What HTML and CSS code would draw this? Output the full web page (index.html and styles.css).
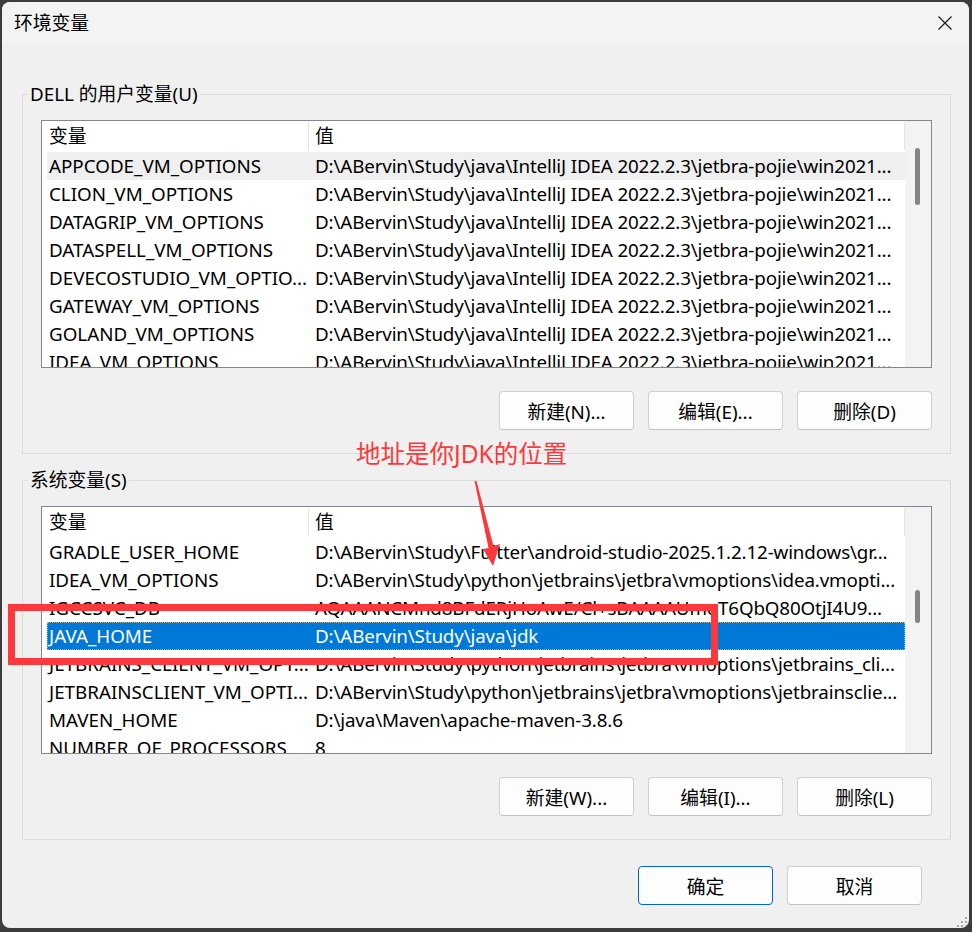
FILE: index.html
```html
<!DOCTYPE html>
<html lang="zh-CN">
<head>
    <meta charset="UTF-8">
    <title>环境变量</title>
    <link rel="stylesheet" href="styles.css">
</head>
<body>
    <div class="dialog">
        <div class="titlebar">
            <span class="title">环境变量</span>
            <svg class="close" width="14" height="14" viewBox="0 0 14 14">
                <path d="M0.5 0.5L13.5 13.5M13.5 0.5L0.5 13.5" stroke="#1b1b1b" stroke-width="1.2" fill="none"/>
            </svg>
        </div>

        <div class="content">
            <fieldset class="group">
                <legend>DELL 的用户变量(U)</legend>
                <div class="list">
                    <div class="list-main">
                        <div class="list-head">
                            <div class="head-name">变量</div>
                            <div class="head-value">值</div>
                        </div>
                        <div class="row hover">
                            <div class="cell-name">APPCODE_VM_OPTIONS</div>
                            <div class="cell-value">D:\ABervin\Study\java\IntelliJ IDEA 2022.2.3\jetbra-pojie\win2021...</div>
                        </div>
                        <div class="row">
                            <div class="cell-name">CLION_VM_OPTIONS</div>
                            <div class="cell-value">D:\ABervin\Study\java\IntelliJ IDEA 2022.2.3\jetbra-pojie\win2021...</div>
                        </div>
                        <div class="row">
                            <div class="cell-name">DATAGRIP_VM_OPTIONS</div>
                            <div class="cell-value">D:\ABervin\Study\java\IntelliJ IDEA 2022.2.3\jetbra-pojie\win2021...</div>
                        </div>
                        <div class="row">
                            <div class="cell-name">DATASPELL_VM_OPTIONS</div>
                            <div class="cell-value">D:\ABervin\Study\java\IntelliJ IDEA 2022.2.3\jetbra-pojie\win2021...</div>
                        </div>
                        <div class="row">
                            <div class="cell-name">DEVECOSTUDIO_VM_OPTIO...</div>
                            <div class="cell-value">D:\ABervin\Study\java\IntelliJ IDEA 2022.2.3\jetbra-pojie\win2021...</div>
                        </div>
                        <div class="row">
                            <div class="cell-name">GATEWAY_VM_OPTIONS</div>
                            <div class="cell-value">D:\ABervin\Study\java\IntelliJ IDEA 2022.2.3\jetbra-pojie\win2021...</div>
                        </div>
                        <div class="row">
                            <div class="cell-name">GOLAND_VM_OPTIONS</div>
                            <div class="cell-value">D:\ABervin\Study\java\IntelliJ IDEA 2022.2.3\jetbra-pojie\win2021...</div>
                        </div>
                        <div class="row">
                            <div class="cell-name">IDEA_VM_OPTIONS</div>
                            <div class="cell-value">D:\ABervin\Study\java\IntelliJ IDEA 2022.2.3\jetbra-pojie\win2021...</div>
                        </div>
                    </div>
                    <div class="scroll">
                        <div class="thumb thumb-user"></div>
                    </div>
                </div>
                <div class="btn-row">
                    <button class="btn">新建(N)...</button>
                    <button class="btn">编辑(E)...</button>
                    <button class="btn">删除(D)</button>
                </div>
            </fieldset>

            <fieldset class="group group-sys">
                <legend>系统变量(S)</legend>
                <div class="list">
                    <div class="list-main">
                        <div class="list-head">
                            <div class="head-name">变量</div>
                            <div class="head-value">值</div>
                        </div>
                        <div class="row">
                            <div class="cell-name">GRADLE_USER_HOME</div>
                            <div class="cell-value">D:\ABervin\Study\Fultter\android-studio-2025.1.2.12-windows\gr...</div>
                        </div>
                        <div class="row">
                            <div class="cell-name">IDEA_VM_OPTIONS</div>
                            <div class="cell-value">D:\ABervin\Study\python\jetbrains\jetbra\vmoptions\idea.vmopti...</div>
                        </div>
                        <div class="row">
                            <div class="cell-name">IGCCSVC_DB</div>
                            <div class="cell-value">AQAAANCMnd8BFdERjHoAwE/Cl+sBAAAAUmoT6QbQ80OtjI4U9...</div>
                        </div>
                        <div class="row selected">
                            <div class="cell-name">JAVA_HOME</div>
                            <div class="cell-value">D:\ABervin\Study\java\jdk</div>
                        </div>
                        <div class="row">
                            <div class="cell-name">JETBRAINS_CLIENT_VM_OPT...</div>
                            <div class="cell-value">D:\ABervin\Study\python\jetbrains\jetbra\vmoptions\jetbrains_cli...</div>
                        </div>
                        <div class="row">
                            <div class="cell-name">JETBRAINSCLIENT_VM_OPTI...</div>
                            <div class="cell-value">D:\ABervin\Study\python\jetbrains\jetbra\vmoptions\jetbrainsclie...</div>
                        </div>
                        <div class="row">
                            <div class="cell-name">MAVEN_HOME</div>
                            <div class="cell-value">D:\java\Maven\apache-maven-3.8.6</div>
                        </div>
                        <div class="row">
                            <div class="cell-name">NUMBER_OF_PROCESSORS</div>
                            <div class="cell-value">8</div>
                        </div>
                    </div>
                    <div class="scroll">
                        <div class="thumb thumb-sys"></div>
                    </div>
                </div>
                <div class="btn-row">
                    <button class="btn">新建(W)...</button>
                    <button class="btn">编辑(I)...</button>
                    <button class="btn">删除(L)</button>
                </div>
            </fieldset>

            <div class="footer">
                <button class="btn btn-default">确定</button>
                <button class="btn">取消</button>
            </div>
        </div>

        <!-- 标注 -->
        <span class="note">地址是你JDK的位置</span>
        <svg class="marks" width="972" height="932" viewBox="0 0 972 932">
            <polygon points="474.5,481 476.5,481 493.5,546 500,544 493,566 483,549 488.5,548" fill="#f9393d"/>
            <rect x="11.5" y="607.5" width="703" height="54" fill="none" stroke="#f9393d" stroke-width="7"/>
        </svg>

        <svg class="grip" width="12" height="12" viewBox="0 0 12 12">
            <rect x="9" y="1" width="2" height="2" fill="#a8a8a8"/>
            <rect x="5" y="5" width="2" height="2" fill="#a8a8a8"/>
            <rect x="9" y="5" width="2" height="2" fill="#a8a8a8"/>
            <rect x="1" y="9" width="2" height="2" fill="#a8a8a8"/>
            <rect x="5" y="9" width="2" height="2" fill="#a8a8a8"/>
            <rect x="9" y="9" width="2" height="2" fill="#a8a8a8"/>
        </svg>
    </div>
</body>
</html>
```

FILE: styles.css
```css
* {
    box-sizing: border-box;
}
body {
    margin: 0;
    background-color: #3c3c3c;
    font-family: "Noto Sans", "Noto Sans CJK SC", sans-serif;
    font-size: 18.8px;
    color: #000;
}
.dialog {
    position: relative;
    margin: 2px 0 0 2px;
    width: 967px;
    height: 926px;
    background-color: #f0f0f0;
    border-radius: 8px;
    overflow: hidden;
}
.titlebar {
    height: 42px;
    background-color: #f3f3f3;
    display: flex;
    align-items: center;
    justify-content: space-between;
    padding: 0 17px 0 12px;
}
.title {
    line-height: 24px;
}
.content {
    padding: 38px 18px 0 20px;
}
.group {
    margin: 0;
    min-width: 0;
    padding: 14px 18px 23px 18px;
    border: 1px solid #dcdcdc;
}
.group legend {
    margin-left: -13px;
    padding: 0 2px;
    line-height: 24px;
}
.group-sys {
    margin-top: 14px;
}
.list {
    display: flex;
    height: 248px;
    border: 1px solid #828790;
    background-color: #fff;
}
.list-main {
    flex: 1;
    min-width: 0;
    overflow: hidden;
}
.list-head {
    display: flex;
    height: 31px;
    padding-top: 1px;
}
.head-name {
    width: 266px;
    padding-left: 7px;
    line-height: 28px;
    height: 28px;
}
.head-value {
    flex: 1;
    padding-left: 6px;
    line-height: 28px;
    height: 28px;
    border-left: 1px solid #e5e5e5;
    border-right: 1px solid #e5e5e5;
}
.row {
    display: flex;
    height: 28px;
    line-height: 28px;
    margin-left: 5px;
    white-space: nowrap;
}
.row.hover {
    background-color: #efefef;
}
.row.selected {
    background-color: #0078d7;
    color: #fff;
    outline: 1px dotted #e0a040;
    outline-offset: -1px;
}
.cell-name {
    width: 261px;
    flex-shrink: 0;
    padding-left: 2px;
    overflow: hidden;
}
.cell-value {
    flex: 1;
    min-width: 0;
    padding: 0 4px 0 7px;
    letter-spacing: -0.15px;
    overflow: hidden;
    text-overflow: ellipsis;
}
.scroll {
    width: 26px;
    flex-shrink: 0;
    background-color: #f3f3f3;
}
.thumb {
    width: 5px;
    margin-left: 10px;
    border-radius: 3px;
    background-color: #858585;
}
.thumb-user {
    margin-top: 27px;
    height: 57px;
}
.thumb-sys {
    margin-top: 83px;
    height: 33px;
}
.btn-row {
    display: flex;
    justify-content: flex-end;
    gap: 14px;
    margin-top: 23px;
}
.btn {
    width: 135px;
    height: 39px;
    border: 1px solid #d0d0d0;
    border-bottom-color: #c2c2c2;
    border-radius: 4px;
    background-color: #fdfdfd;
    font: inherit;
    color: #000;
    padding: 0;
}
.btn-default {
    border: 1px solid #0067c0;
}
.footer {
    display: flex;
    justify-content: flex-end;
    gap: 14px;
    margin: 26px 29px 0 0;
}
.note {
    position: absolute;
    left: 354px;
    top: 437px;
    font-size: 24.5px;
    line-height: 30px;
    color: #f9393d;
}
.marks {
    position: absolute;
    left: -2px;
    top: -2px;
    pointer-events: none;
}
.grip {
    position: absolute;
    right: 1px;
    bottom: 0;
}
```
